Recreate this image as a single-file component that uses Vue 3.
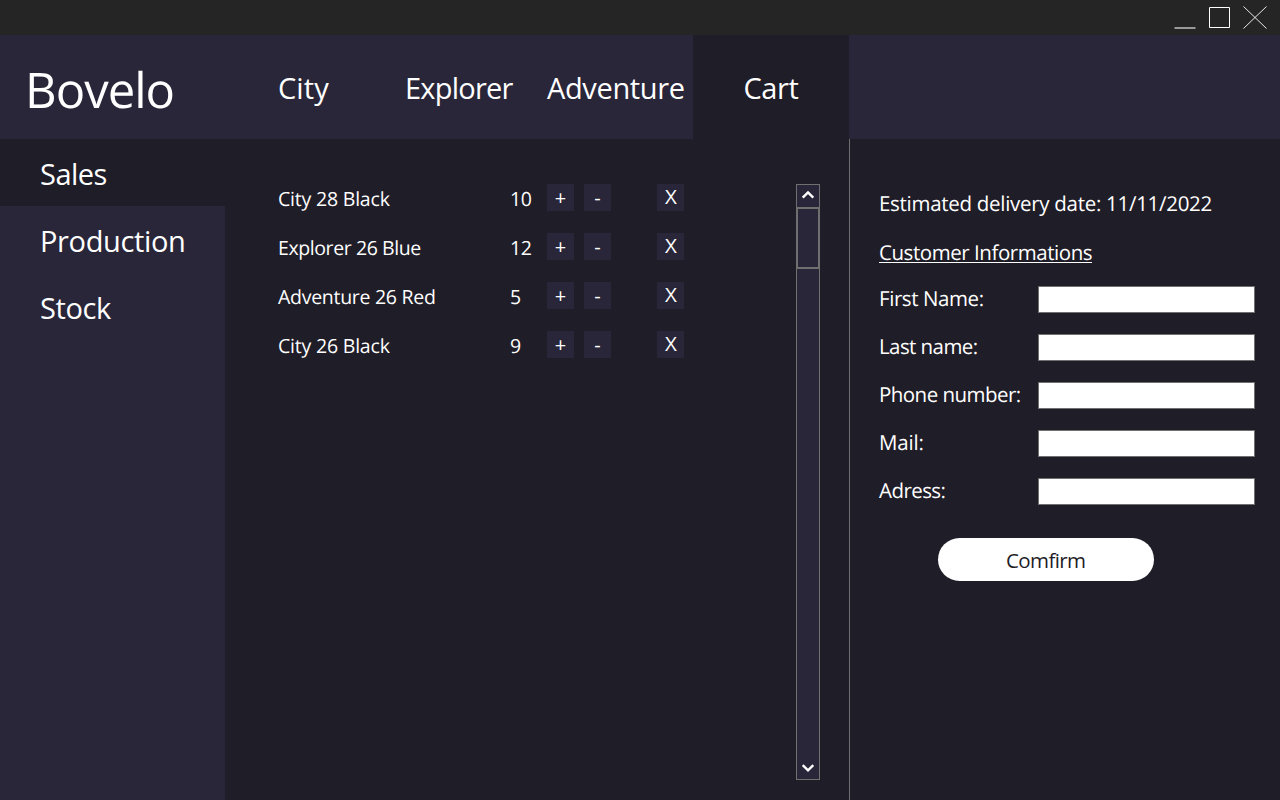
<script setup>
import { ref } from 'vue'

const tabs = ['City', 'Explorer', 'Adventure', 'Cart']
const sections = ['Sales', 'Production', 'Stock']
const items = ref([
  { name: 'City 28 Black', qty: 10 },
  { name: 'Explorer 26 Blue', qty: 12 },
  { name: 'Adventure 26 Red', qty: 5 },
  { name: 'City 26 Black', qty: 9 }
])
const fields = [
  { id: 'first', label: 'First Name:' },
  { id: 'last', label: 'Last name:' },
  { id: 'phone', label: 'Phone number:' },
  { id: 'mail', label: 'Mail:' },
  { id: 'address', label: 'Adress:' }
]
</script>

<template>
  <div class="window">
    <div class="titlebar">
      <svg width="112" height="35" viewBox="0 0 112 35" fill="none">
        <path d="M6.5 28H27.5" stroke="#999" stroke-width="2" />
        <path d="M41.5 7.5h20v20h-20z" stroke="#fff" />
        <path d="M75.5 6.5l23 22M98.5 6.5l-23 22" stroke="#fff" stroke-width="0.9" />
      </svg>
    </div>

    <header class="header">
      <div class="logo">Bovelo</div>
      <button v-for="t in tabs" :key="t" class="tab" :class="[t.toLowerCase(), { active: t === 'Cart' }]">{{ t }}</button>
    </header>

    <div class="body">
      <nav class="sidebar">
        <button v-for="s in sections" :key="s" class="section" :class="[s.toLowerCase(), { active: s === 'Sales' }]">{{ s }}</button>
      </nav>

      <main class="cart-pane">
        <ul class="items">
          <li v-for="(it, i) in items" :key="it.name" class="item">
            <span class="name">{{ it.name }}</span>
            <span class="qty">{{ it.qty }}</span>
            <button class="sq" @click="it.qty++">+</button>
            <button class="sq minus" @click="it.qty--">-</button>
            <button class="sq remove" @click="items.splice(i, 1)">X</button>
          </li>
        </ul>
        <div class="scrollbar">
          <svg class="arrow" width="22" height="22" viewBox="0 0 22 22" fill="none">
            <path d="M5.7 12.6L11 7.4l5.3 5.2" stroke="#fff" stroke-width="2.4" />
          </svg>
          <div class="thumb"></div>
          <svg class="arrow down" width="22" height="22" viewBox="0 0 22 22" fill="none">
            <path d="M5.7 8.2L11 13.4l5.3-5.2" stroke="#fff" stroke-width="2.4" />
          </svg>
        </div>
      </main>

      <aside class="customer">
        <p class="delivery">Estimated delivery date: 11/11/2022</p>
        <h2 class="heading"><span>Customer Informations</span></h2>
        <div v-for="f in fields" :key="f.id" class="field">
          <label :for="f.id" :class="f.id">{{ f.label }}</label>
          <input :id="f.id" type="text" />
        </div>
        <button class="confirm">Comfirm</button>
      </aside>
    </div>
  </div>
</template>

<style>
body { background: #1f1d27; }
</style>

<style scoped>
.window {
  width: 1280px;
  height: 800px;
  display: flex;
  flex-direction: column;
  overflow: hidden;
  background: #1f1d27;
  color: #fff;
  font-family: "Open Sans", "Noto Sans", sans-serif;
  font-size: 20.5px;
  font-kerning: normal;
  text-rendering: geometricPrecision;
}
button {
  margin: 0;
  padding: 0;
  border: 0;
  background: none;
  color: inherit;
  font: inherit;
  text-align: left;
}
.titlebar {
  height: 35px;
  flex: none;
  display: flex;
  justify-content: flex-end;
  background: #252525;
}
.titlebar svg { display: block; }
.header {
  flex: none;
  height: 104px;
  display: grid;
  grid-template-columns: 278px 127px 142px 146px 156px;
  background: #292639;
}
.logo {
  padding-left: 25px;
  font-size: 49px;
  line-height: 110px;
  letter-spacing: -0.98px;
}
.tab {
  height: 104px;
  box-sizing: border-box;
  padding-top: 2px;
  font-size: 29px;
  line-height: 102px;
}
.city { letter-spacing: 0.09px; }
.explorer { letter-spacing: -0.76px; }
.adventure { letter-spacing: -0.36px; }
.cart { letter-spacing: -0.41px; padding-left: 50.5px; }
.active { background: #1f1d27; }

.body { flex: 1; display: flex; min-height: 0; }
.sidebar {
  width: 225px;
  display: flex;
  flex-direction: column;
  background: #292639;
}
.section {
  height: 67px;
  box-sizing: border-box;
  padding: 2px 0 0 40px;
  font-size: 29px;
  line-height: 65px;
}
.sales { letter-spacing: -0.5px; }
.production { letter-spacing: -0.36px; }
.stock { letter-spacing: -0.4px; }

.cart-pane {
  width: 624px;
  box-sizing: border-box;
  padding: 45px 29px 20px 53px;
  display: flex;
  justify-content: space-between;
}
.items {
  margin: 0;
  padding: 0;
  list-style: none;
  display: flex;
  flex-direction: column;
  gap: 22px;
}
.item {
  height: 27px;
  display: grid;
  grid-template-columns: 232px 37px 27px 27px 27px;
}
.name, .qty { font-size: 19.5px; line-height: 29px; }
.name { letter-spacing: -0.2px; }
.qty { letter-spacing: -0.5px; }
.item:nth-child(2) .name { letter-spacing: -0.41px; }
.item:nth-child(3) .name { letter-spacing: -0.28px; }
.sq {
  height: 27px;
  box-sizing: border-box;
  background: #292639;
  text-align: center;
  font-size: 20px;
  line-height: 27px;
}
.minus { margin-left: 10px; margin-right: -10px; }
.remove {
  margin-left: 56px;
  margin-right: -56px;
  padding: 0 0 3px 1px;
  font-size: 20.5px;
  line-height: 24px;
}

.scrollbar {
  width: 24px;
  box-sizing: border-box;
  border: 1px solid #6f6f6f;
  background: #292639;
  display: flex;
  flex-direction: column;
}
.arrow { display: block; flex: none; }
.down { margin-top: auto; }
.thumb {
  box-sizing: border-box;
  height: 62px;
  margin: 0 -1px;
  border: 2px solid #6f6f6f;
}

.customer {
  flex: 1;
  border-left: 1px solid #6f6f6f;
  padding: 50px 25px 0 29px;
  display: flex;
  flex-direction: column;
}
.delivery, .heading {
  margin: 0;
  font-size: 20.5px;
  font-weight: 400;
  line-height: 30px;
}
.delivery { margin-bottom: 19px; letter-spacing: -0.29px; }
.heading { height: 30px; margin-bottom: 18px; letter-spacing: -0.45px; }
.heading span {
  display: inline-block;
  height: 21px;
  margin-top: 3px;
  line-height: 24px;
  border-bottom: 1px solid #fff;
}
.field {
  height: 27px;
  margin-bottom: 21px;
  display: flex;
  justify-content: space-between;
}
label { line-height: 26px; white-space: nowrap; }
.first { letter-spacing: -0.42px; }
.last { letter-spacing: -0.58px; }
.phone { letter-spacing: -0.54px; }
.mail { letter-spacing: -0.2px; }
.address { letter-spacing: -0.56px; }
input {
  width: 217px;
  height: 27px;
  box-sizing: border-box;
  border: 1px solid #6f6f6f;
  border-radius: 0;
  background: #fff;
  padding: 0 3px;
  font: inherit;
}
.confirm {
  width: 215.5px;
  height: 43px;
  margin: 12px 0 0 59px;
  border-radius: 22px;
  background: #fff;
  color: #1f1d27;
  text-align: center;
  line-height: 44px;
  letter-spacing: -0.61px;
}
</style>
